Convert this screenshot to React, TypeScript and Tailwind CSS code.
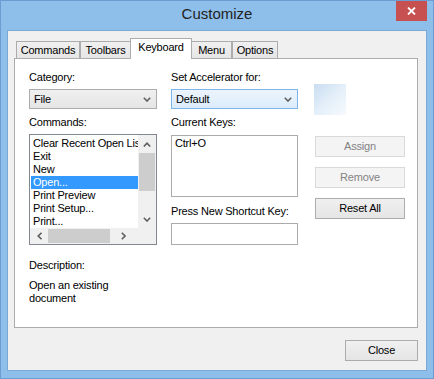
import React from "react";

function Chevron({ dir, className = "" }: { dir: "up" | "down" | "left" | "right"; className?: string }) {
  const pts: Record<string, string> = {
    up: "0.8,4.5 4,1.2 7.2,4.5",
    down: "0.8,0.8 4,4 7.2,0.8",
    left: "4.5,0.8 1.2,4 4.5,7.2",
    right: "0.8,0.8 4,4 0.8,7.2",
  };
  const vertical = dir === "up" || dir === "down";
  return (
    <svg
      width={vertical ? 8 : 5}
      height={vertical ? 5 : 8}
      viewBox={vertical ? "0 0 8 5" : "0 0 5 8"}
      className={className}
    >
      <polyline points={pts[dir]} fill="none" stroke="#5f5f5f" strokeWidth="1.6" />
    </svg>
  );
}

function Select({ value, focused }: { value: string; focused?: boolean }) {
  return (
    <div
      className={
        "mt-[4px] flex h-[20px] items-center justify-between border pl-[4px] pr-[5px] " +
        (focused
          ? "border-[#7eb4ea] bg-linear-to-b from-[#ecf4fc] to-[#dcecfc]"
          : "border-[#acacac] bg-linear-to-b from-[#f0f0f0] to-[#e5e5e5]")
      }
    >
      <span>{value}</span>
      <Chevron dir="down" />
    </div>
  );
}

function Button({ label, disabled }: { label: string; disabled?: boolean }) {
  return (
    <div
      className={
        "flex h-[21px] items-center justify-center border " +
        (disabled
          ? "border-[#d9d9d9] bg-[#f4f4f4] text-[#838383]"
          : "border-[#acacac] bg-linear-to-b from-[#f0f0f0] to-[#e5e5e5] text-black")
      }
    >
      {label}
    </div>
  );
}

const commands = [
  "Clear Recent Open List",
  "Exit",
  "New",
  "Open...",
  "Print Preview",
  "Print Setup...",
  "Print...",
];

const tabs = [
  { name: "Commands", w: "w-[64px]" },
  { name: "Toolbars", w: "w-[51px]" },
  { name: "Keyboard", w: "w-[62px]", active: true },
  { name: "Menu", w: "w-[41px]" },
  { name: "Options", w: "w-[46px]" },
];

export default function App() {
  return (
    <div className="flex h-[379px] w-[434px] flex-col border border-[#6d9cd2] bg-[#8ebfea] font-['Liberation_Sans',Arial,sans-serif] text-[11px] tracking-[-0.2px] text-black">
      {/* title bar */}
      <div className="relative flex h-[29px] items-center justify-center pb-[2px]">
        <span className="text-[15px] tracking-normal text-[#222]">Customize</span>
        <div className="absolute right-[6px] top-0 flex h-[20px] w-[31px] items-center justify-center bg-[#c75050]">
          <svg width="9" height="8" viewBox="0 0 9 8">
            <path d="M1 0.5 L8 7.5 M8 0.5 L1 7.5" stroke="white" strokeWidth="1.8" />
          </svg>
        </div>
      </div>

      {/* client */}
      <div className="ml-[6px] flex h-[341px] w-[420px] flex-col border border-[#7aa8d8] bg-[#f0f0f0]">
        {/* tabs */}
        <div className="ml-[6px] mt-[7px] flex h-[21px] items-end pl-[2px]">
          {tabs.map((t) =>
            t.active ? (
              <div
                key={t.name}
                className={"relative z-10 -ml-px -mr-px flex h-[21px] justify-center border border-b-0 border-[#acacac] bg-white pt-[1px] leading-[14px] " + t.w}
              >
                {t.name}
              </div>
            ) : (
              <div
                key={t.name}
                className={"flex h-[18px] justify-center border border-b-0 border-[#acacac] bg-linear-to-b from-[#f0f0f0] to-[#e5e5e5] pt-[1px] leading-[14px] " + t.w}
              >
                {t.name}
              </div>
            )
          )}
        </div>

        {/* panel */}
        <div className="-mt-px ml-[6px] flex h-[270px] w-[404px] border border-[#acacac] bg-white pl-[14px] pt-[11px]">
          {/* column 1 */}
          <div className="flex w-[128px] flex-col">
            <div className="leading-[15px]">Category:</div>
            <Select value="File" />
            <div className="mt-[6px] leading-[15px]">Commands:</div>
            <div className="mt-[4px] flex h-[111px] flex-col border border-[#828790]">
              <div className="flex h-[93px]">
                <div className="w-[108px] overflow-hidden pl-[1px] pt-[2px]">
                  {commands.map((c) => (
                    <div
                      key={c}
                      className={
                        "h-[13px] whitespace-nowrap pl-[2px] leading-[13px] " +
                        (c === "Open..." ? "bg-[#3399ff] text-white" : "")
                      }
                    >
                      {c}
                    </div>
                  ))}
                </div>
                <div className="flex w-[18px] flex-col items-center bg-[#f0f0f0]">
                  <div className="flex h-[18px] items-center justify-center">
                    <Chevron dir="up" />
                  </div>
                  <div className="h-[38px] w-[16px] bg-[#cdcdcd]" />
                  <div className="flex-1" />
                  <div className="flex h-[17px] items-center justify-center pb-[1px]">
                    <Chevron dir="down" />
                  </div>
                </div>
              </div>
              <div className="flex h-[16px] bg-[#f0f0f0]">
                <div className="flex w-[108px] items-center">
                  <div className="flex w-[18px] justify-center pl-[1px]">
                    <Chevron dir="left" />
                  </div>
                  <div className="h-[14px] w-[62px] bg-[#cdcdcd]" />
                  <div className="flex flex-1 justify-center pr-[1px]">
                    <Chevron dir="right" />
                  </div>
                </div>
                <div className="w-[18px]" />
              </div>
            </div>
            <div className="mt-[13px] leading-[15px]">Description:</div>
            <div className="mt-[6px] leading-[13px]">
              Open an existing
              <br />
              document
            </div>
          </div>

          {/* column 2 */}
          <div className="ml-[14px] flex w-[127px] flex-col">
            <div className="leading-[15px]">Set Accelerator for:</div>
            <Select value="Default" focused />
            <div className="mt-[6px] leading-[15px]">Current Keys:</div>
            <div className="mt-[5px] h-[62px] border border-[#ababab] pl-[3px] pt-[1px] leading-[13px]">
              Ctrl+O
            </div>
            <div className="mt-[7px] leading-[15px]">Press New Shortcut Key:</div>
            <div className="mt-[4px] h-[22px] border border-[#ababab]" />
          </div>

          {/* column 3 */}
          <div className="ml-[16px] flex w-[92px] flex-col">
            <div className="mt-[14px] h-[31px] w-[32px] bg-linear-to-br from-[#c9ddf1] via-[#e4eff9] to-[#f7fafd]" />
            <div className="ml-[1px] mt-[21px] flex w-[90px] flex-col gap-[10px]">
              <Button label="Assign" disabled />
              <Button label="Remove" disabled />
              <Button label="Reset All" />
            </div>
          </div>
        </div>

        {/* footer */}
        <div className="mt-[12px] flex justify-end pr-[8px]">
          <div className="w-[73px]">
            <Button label="Close" />
          </div>
        </div>
      </div>
    </div>
  );
}
